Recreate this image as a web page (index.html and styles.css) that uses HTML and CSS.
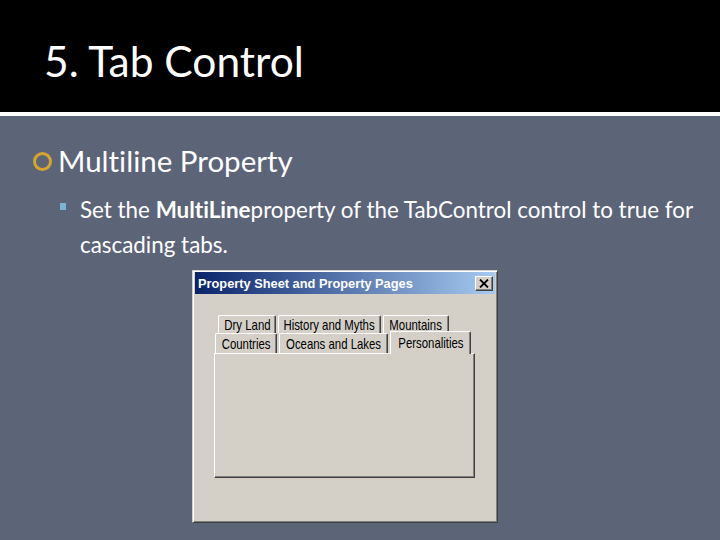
FILE: index.html
```html
<!DOCTYPE html>
<html>
<head>
<meta charset="utf-8">
<link rel="stylesheet" href="styles.css">
</head>
<body>
<div class="slide">
  <header class="header">
    <h1 class="title">5. Tab Control</h1>
  </header>
  <div class="rule"></div>
  <main class="content">
    <div class="lvl1">
      <span class="ring"></span>
      <span class="lvl1-text">Multiline Property</span>
    </div>
    <div class="lvl2">
      <span class="square"></span>
      <p class="lvl2-text"><span>Set the </span><b>MultiLine</b><span>property of the TabControl control to true for</span><br><span>cascading tabs.</span></p>
    </div>
    <div class="window">
      <div class="titlebar">
        <span class="caption">Property Sheet and Property Pages</span>
        <span class="close">
          <svg width="10" height="9" viewBox="0 0 10 9"><path d="M1 0.5 L9 8.5 M9 0.5 L1 8.5" stroke="#000" stroke-width="1.8" fill="none"/></svg>
        </span>
      </div>
      <div class="dlg-body">
        <div class="tabrow row1">
          <div class="tab w58"><span class="lbl">Dry Land</span></div>
          <div class="tab w103"><span class="lbl">History and Myths</span></div>
          <div class="tab w66"><span class="lbl">Mountains</span></div>
        </div>
        <div class="tabrow row2">
          <div class="tab w62"><span class="lbl">Countries</span></div>
          <div class="tab w109"><span class="lbl">Oceans and Lakes</span></div>
          <div class="tab sel"><span class="lbl">Personalities</span></div>
        </div>
        <div class="panel"></div>
      </div>
    </div>
  </main>
</div>
</body>
</html>
```

FILE: styles.css
```css
html, body {
  margin: 0;
  padding: 0;
}
body {
  background: #5c6478;
  font-family: Lato, "Open Sans", sans-serif;
  font-variant-ligatures: none;
}
.slide {
  width: 720px;
  height: 540px;
  overflow: hidden;
  background: #5c6478;
}
.header {
  height: 112px;
  background: #000;
  padding: 40px 0 0 44px;
  box-sizing: border-box;
}
.title {
  margin: 0;
  font-weight: 400;
  font-size: 42.5px;
  line-height: 1;
  color: #fff;
}
.rule {
  height: 4px;
  background: #fff;
}
.content {
  padding-top: 30px;
}
.lvl1 {
  display: flex;
  align-items: center;
  padding-left: 33px;
  height: 30px;
}
.ring {
  width: 13px;
  height: 13px;
  border: 3px solid #d6a52a;
  border-radius: 50%;
  margin-right: 6px;
}
.lvl1-text {
  font-size: 29.5px;
  line-height: 1;
  color: #fff;
}
.lvl2 {
  display: flex;
  align-items: flex-start;
  padding-left: 60px;
  margin-top: 16px;
}
.square {
  width: 6px;
  height: 7px;
  background: #7cb3d2;
  margin-top: 11px;
  margin-right: 14px;
  flex: none;
}
.lvl2-text {
  margin: 0;
  width: 630px;
  font-size: 22.4px;
  line-height: 35px;
  color: #fff;
  white-space: nowrap;
}
.lvl2-text b {
  font-weight: 700;
}
.window {
  margin: 8px 0 0 192px;
  width: 306px;
  height: 253px;
  box-sizing: border-box;
  background: #d4d0c8;
  border: 1px solid;
  border-color: #d4d0c8 #404040 #404040 #d4d0c8;
  box-shadow: inset 1px 1px 0 #fff, inset -1px -1px 0 #808080;
  padding: 1px 2px 2px 2px;
}
.titlebar {
  height: 22px;
  background: linear-gradient(to right, #0a246a, #a6caf0);
  display: flex;
  align-items: center;
  justify-content: space-between;
  padding: 0 2px 0 3px;
}
.caption {
  color: #fff;
  font-family: "Liberation Sans", Arial, sans-serif;
  font-weight: 700;
  font-size: 12.8px;
}
.close {
  width: 18px;
  height: 15px;
  box-sizing: border-box;
  background: #d4d0c8;
  border: 1px solid;
  border-color: #fff #404040 #404040 #fff;
  box-shadow: inset -1px -1px 0 #808080;
  display: flex;
  align-items: center;
  justify-content: center;
}
.dlg-body {
  padding: 21px 0 0 19px;
}
.tabrow {
  display: flex;
  align-items: flex-end;
}
.row1 {
  margin-left: 4px;
  gap: 2px;
  height: 18px;
}
.row2 {
  margin-left: 1px;
  gap: 2px;
  height: 20px;
}
.tab {
  box-sizing: border-box;
  height: 100%;
  background: #d4d0c8;
  border-top: 1px solid #fff;
  border-left: 1px solid #fff;
  border-right: 1px solid #404040;
  border-radius: 2px 2px 0 0;
  box-shadow: inset -1px 0 0 #808080;
  display: flex;
  justify-content: center;
  align-items: center;
  overflow: visible;
}
.lbl {
  display: inline-block;
  white-space: nowrap;
  font-family: "Liberation Sans", Arial, sans-serif;
  font-size: 15px;
  line-height: 1;
  color: #000;
  transform: scaleX(0.76);
}
.w58 { width: 58px; }
.w62 { width: 62px; }
.w66 { width: 66px; }
.w103 { width: 103px; }
.w109 { width: 109px; }
.sel {
  width: 81px;
  height: 23px;
  margin-bottom: -1px;
  position: relative;
  z-index: 1;
  align-items: flex-start;
  padding-top: 3px;
}
.panel {
  width: 261px;
  height: 125px;
  box-sizing: border-box;
  border: 1px solid;
  border-color: #fff #404040 #404040 #fff;
  box-shadow: inset -1px -1px 0 #808080;
  background: #d4d0c8;
}
```
